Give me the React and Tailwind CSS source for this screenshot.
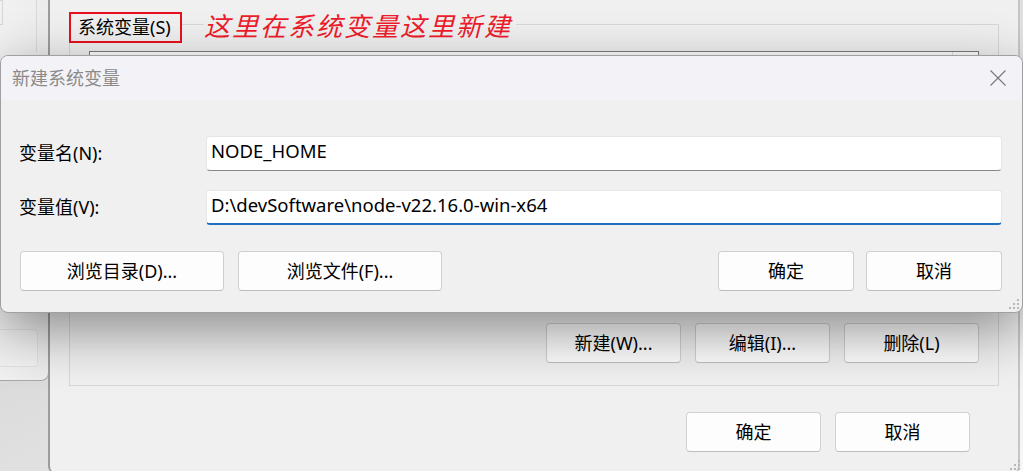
import React from 'react';

const cjk = "font-['Noto_Sans','Noto_Sans_CJK_SC',sans-serif]";

function WinButton({ children, className = '' }) {
  return (
    <button
      className={`flex items-center justify-center rounded-[4px] border border-[#d0d0d0] border-b-[#bdbdbd] bg-[#fdfdfd] text-[18px] text-black ${className}`}
    >
      {children}
    </button>
  );
}

function Grip() {
  return (
    <svg width="12" height="12" viewBox="0 0 12 12">
      {[[9, 1], [5, 5], [9, 5], [1, 9], [5, 9], [9, 9]].map(([x, y], i) => (
        <rect key={i} x={x} y={y} width="2" height="2" fill="#b8b8b8" />
      ))}
    </svg>
  );
}

export default function App() {
  return (
    <div className={`relative w-[1023px] h-[471px] overflow-hidden bg-gradient-to-br from-[#c4c4c4] via-[#e0e0e0] to-[#f7f7f7] ${cjk}`}>
      {/* window behind, on the left */}
      <div className="absolute left-[-14px] top-[-10px] w-[63px] h-[391px] rounded-br-lg border-r border-b border-[#a8a8a8] bg-gradient-to-r from-[#f3f3f3] to-[#ececec]">
        <div className="ml-[14px] mt-[10px] h-[25px] w-[3px] border border-l-0 border-[#d6d6d6]" />
        <div className="absolute left-[50px] top-0 h-[62px] border-l border-[#d8d8d8]" />
        <div className="absolute left-[10px] top-[339px] h-[38px] w-[42px] rounded-[4px] border border-[#e2e2e2] bg-[#f2f2f2]" />
      </div>

      {/* environment variables window */}
      <div className="absolute left-[48px] top-0 flex h-[474px] w-[972px] flex-col rounded-b-lg border-l-2 border-r-2 border-b border-l-[#9c9c9c] border-r-[#c6c6c6] border-b-[#9c9c9c] bg-[#f0f0f0]">
        <div className="relative mx-[19px] mt-[24px] flex h-[362px] flex-col border border-[#d7d7d7] px-[19px] pt-[26px] pb-[22px]">
          <div className="flex-1 border border-[#7a7a7a] bg-white">
            <div className="flex h-[24px] border-b border-[#e5e5e5]">
              <div className="flex-1" />
              <div className="w-[26px] border-l border-[#e0e0e0]" />
            </div>
          </div>
          <div className="mt-[12px] flex justify-end gap-[14px]">
            <WinButton className="h-[40px] w-[135px]">新建(W)...</WinButton>
            <WinButton className="h-[40px] w-[135px]">编辑(I)...</WinButton>
            <WinButton className="h-[40px] w-[135px]">删除(L)</WinButton>
          </div>

          {/* group label with red annotation box */}
          <div className="absolute left-[-1px] top-[-13px] flex h-[31px] w-[113px] items-center border-2 border-[#e8101e] bg-[#f0f0f0] pl-[7px] text-[18px] text-black">
            系统变量(S)
          </div>
          <div className="absolute left-[134px] top-[-15px] bg-[#f0f0f0] pr-[4px] text-[26px] italic tracking-[2px] text-[#ee1c2c] leading-[32px]">
            这里在系统变量这里新建
          </div>
        </div>

        <div className="mt-[26px] mr-[48px] flex justify-end gap-[14px]">
          <WinButton className="h-[40px] w-[135px]">确定</WinButton>
          <WinButton className="h-[40px] w-[135px]">取消</WinButton>
        </div>
      </div>

      <div className="absolute right-[2px] bottom-0">
        <Grip />
      </div>

      {/* new system variable dialog */}
      <div className="absolute left-0 top-[55px] flex h-[258px] w-[1023px] flex-col overflow-hidden rounded-lg border border-[#a0a0a0] bg-[#f0f0f0] shadow-[0_18px_56px_rgba(0,0,0,0.42)]">
        <div className="flex h-[44px] items-center justify-between bg-[#f3f3f7] pl-[11px] pr-[16px]">
          <span className="text-[18px] text-[#8a8a8a]">新建系统变量</span>
          <svg width="16" height="16" viewBox="0 0 16 16">
            <path d="M0.5 0.5 L15.5 15.5 M15.5 0.5 L0.5 15.5" stroke="#777" strokeWidth="1.1" fill="none" />
          </svg>
        </div>

        <div className="flex flex-1 flex-col pl-[18px] pr-[20px]">
          <div className="mt-[36px] flex h-[35px] items-center">
            <span className="w-[187px] pb-[1px] text-[18px] text-black">变量名(N):</span>
            <div className="flex h-full flex-1 items-center rounded-[4px] border border-[#e6e6e6] border-b-[#868686] bg-white pb-[5px] pl-[4px] text-[18.5px] text-black">
              NODE_HOME
            </div>
          </div>
          <div className="mt-[19px] flex h-[35px] items-center">
            <span className="w-[187px] pb-[1px] text-[18px] text-black">变量值(V):</span>
            <div className="flex h-full flex-1 items-center rounded-[4px] border border-[#e6e6e6] border-b-2 border-b-[#1f6fc0] bg-white pb-[4px] pl-[4px] text-[18.5px] text-black">
              D:\devSoftware\node-v22.16.0-win-x64
            </div>
          </div>
          <div className="mt-[26px] flex items-center">
            <WinButton className="ml-[1px] h-[40px] w-[204px]">浏览目录(D)...</WinButton>
            <WinButton className="ml-[14px] h-[40px] w-[204px]">浏览文件(F)...</WinButton>
            <WinButton className="ml-auto h-[40px] w-[136px]">确定</WinButton>
            <WinButton className="ml-[12px] h-[40px] w-[136px]">取消</WinButton>
          </div>
        </div>

        <div className="absolute right-[2px] bottom-[2px]">
          <Grip />
        </div>
      </div>
    </div>
  );
}
